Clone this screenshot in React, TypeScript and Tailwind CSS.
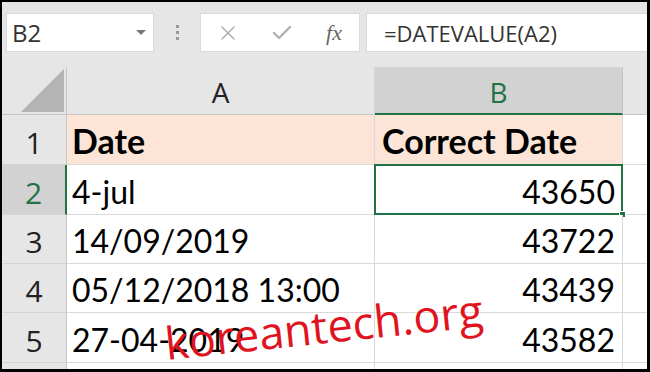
import { X, Check } from "lucide-react";

const cellFont = { fontFamily: "Lato, 'Liberation Sans', sans-serif" };
const uiFont = { fontFamily: "'Open Sans', 'Noto Sans', sans-serif" };

type Row = { n: number; a: string; b: string; h: string };

const rows: Row[] = [
  { n: 1, a: "Date", b: "Correct Date", h: "h-[50px]" },
  { n: 2, a: "4-jul", b: "43650", h: "h-[50px]" },
  { n: 3, a: "14/09/2019", b: "43722", h: "h-[49px]" },
  { n: 4, a: "05/12/2018 13:00", b: "43439", h: "h-[49px]" },
  { n: 5, a: "27-04-2019", b: "43582", h: "h-[50px]" },
];

function SheetRow({ r }: { r: Row }) {
  const head = r.n === 1;
  const sel = r.n === 2;
  return (
    <div className={`flex ${r.h}`}>
      <div
        className={`w-[65px] shrink-0 flex items-end justify-center pb-[6px] text-[30px] leading-none border-b border-[#d4d4d4] ${
          sel ? "bg-[#d2d2d2] text-[#217346] border-r-2 border-r-[#217346]" : "bg-[#e6e6e6] text-[#222] border-r border-r-[#c6c6c6]"
        }`}
        style={uiFont}
      >
        {r.n}
      </div>
      <div
        className={`w-[308px] shrink-0 flex items-end pl-[5px] pb-[6px] leading-none text-black border-b border-r border-[#d9d9d9] ${
          head ? "bg-[#fce4d6] font-bold text-[34px]" : "bg-white text-[32px]"
        }`}
        style={cellFont}
      >
        {r.a}
      </div>
      <div
        className={`relative w-[248px] shrink-0 flex items-end pb-[6px] leading-none text-black border-b border-r border-[#d9d9d9] ${
          head ? "bg-[#fce4d6] font-bold text-[34px] pl-[7px]" : "bg-white text-[32px] justify-end pr-[7px]"
        }`}
        style={cellFont}
      >
        {r.b}
        {sel && (
          <>
            <div className="absolute -left-px -top-px -right-px -bottom-px border-2 border-[#217346]" />
            <div className="absolute -right-[4px] -bottom-[4px] w-[7px] h-[7px] bg-[#217346] border border-white" />
          </>
        )}
      </div>
      <div className="flex-1 bg-white border-b border-[#d9d9d9]" />
    </div>
  );
}

export default function App() {
  return (
    <div className="w-[650px] h-[372px] bg-black pt-[2px] pl-[2px] pr-[3px] pb-[3px] overflow-hidden">
      <div className="relative w-full h-full bg-[#e6e6e6] overflow-hidden flex flex-col">
        {/* formula bar */}
        <div className="h-[65px] shrink-0 flex items-start pt-[11px] pl-[4px]">
          <div className="w-[148px] h-[39px] bg-white border border-[#dadada] flex items-center justify-between pl-[5px] pr-[7px]">
            <span className="text-[24px] text-[#333] leading-none" style={uiFont}>B2</span>
            <span className="w-0 h-0 border-l-[5px] border-r-[5px] border-t-[5px] border-l-transparent border-r-transparent border-t-[#777]" />
          </div>
          <div className="w-[46px] h-[39px] flex flex-col items-center justify-center gap-[3px]">
            <span className="w-[3px] h-[3px] bg-[#9a9a9a]" />
            <span className="w-[3px] h-[3px] bg-[#9a9a9a]" />
            <span className="w-[3px] h-[3px] bg-[#9a9a9a]" />
          </div>
          <div className="w-[160px] h-[39px] bg-white border border-[#dadada] flex items-center">
            <div className="w-[54px] flex justify-center">
              <X size={24} strokeWidth={1.5} className="text-[#b0b0b0]" />
            </div>
            <div className="w-[54px] flex justify-center">
              <Check size={24} strokeWidth={2.4} className="text-[#b0b0b0]" />
            </div>
            <div className="w-[50px] flex justify-center">
              <span className="text-[22px] italic text-[#666]" style={{ fontFamily: "'Liberation Serif', serif" }}>fx</span>
            </div>
          </div>
          <div className="ml-[6px] flex-1 h-[39px] bg-white border-y border-l border-[#dadada] flex items-center pl-[17px]">
            <span className="text-[22px] text-[#333] leading-none" style={uiFont}>=DATEVALUE(A2)</span>
          </div>
        </div>

        {/* column headers */}
        <div className="flex h-[48px] shrink-0">
          <div className="w-[65px] shrink-0 border-r border-b border-[#c6c6c6] flex items-end justify-end pr-[2px] pb-[2px]">
            <svg width="43" height="43" viewBox="0 0 43 43">
              <polygon points="43,0 43,43 0,43" fill="#b4b4b4" />
            </svg>
          </div>
          <div className="w-[308px] shrink-0 border-r border-b border-r-[#d4d4d4] border-b-[#c6c6c6] flex items-center justify-center pt-[2px] text-[28px] text-[#222] leading-none" style={uiFont}>
            A
          </div>
          <div className="w-[248px] shrink-0 bg-[#d2d2d2] border-r border-r-[#c6c6c6] border-b-2 border-b-[#217346] flex items-center justify-center pt-[3px] text-[28px] text-[#217346] leading-none" style={uiFont}>
            B
          </div>
          <div className="flex-1 border-b border-[#c6c6c6]" />
        </div>

        {rows.map((r) => (
          <SheetRow key={r.n} r={r} />
        ))}
        <div className="flex flex-1">
          <div className="w-[65px] shrink-0 bg-[#e6e6e6] border-r border-[#c6c6c6]" />
          <div className="w-[308px] shrink-0 bg-white border-r border-[#d9d9d9]" />
          <div className="w-[248px] shrink-0 bg-white border-r border-[#d9d9d9]" />
          <div className="flex-1 bg-white" />
        </div>

        {/* watermark */}
        <div
          className="absolute left-[163px] top-[318px] text-[45px] text-[#e0141e] leading-none whitespace-nowrap origin-left -rotate-[6deg]"
          style={uiFont}
        >
          koreantech.org
        </div>
      </div>
    </div>
  );
}
